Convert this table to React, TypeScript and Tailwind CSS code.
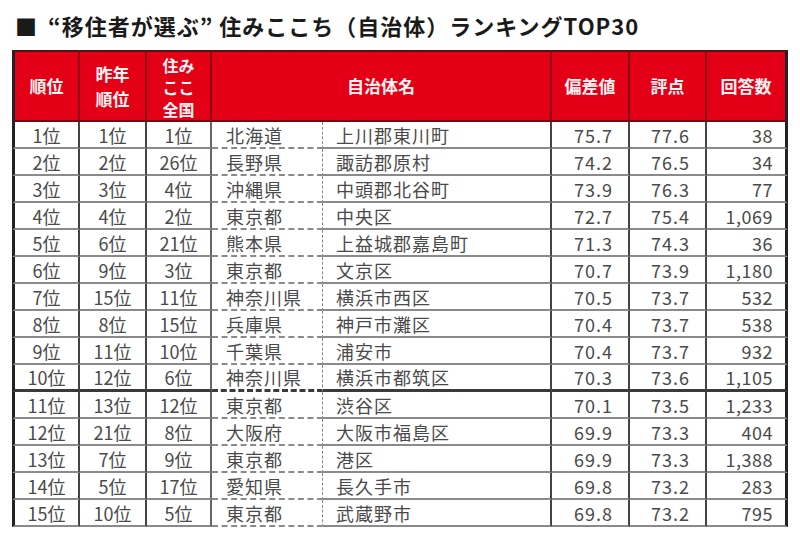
import React from "react";

const rows: string[][] = [
  ["1位", "1位", "1位", "北海道", "上川郡東川町", "75.7", "77.6", "38"],
  ["2位", "2位", "26位", "長野県", "諏訪郡原村", "74.2", "76.5", "34"],
  ["3位", "3位", "4位", "沖縄県", "中頭郡北谷町", "73.9", "76.3", "77"],
  ["4位", "4位", "2位", "東京都", "中央区", "72.7", "75.4", "1,069"],
  ["5位", "6位", "21位", "熊本県", "上益城郡嘉島町", "71.3", "74.3", "36"],
  ["6位", "9位", "3位", "東京都", "文京区", "70.7", "73.9", "1,180"],
  ["7位", "15位", "11位", "神奈川県", "横浜市西区", "70.5", "73.7", "532"],
  ["8位", "8位", "15位", "兵庫県", "神戸市灘区", "70.4", "73.7", "538"],
  ["9位", "11位", "10位", "千葉県", "浦安市", "70.4", "73.7", "932"],
  ["10位", "12位", "6位", "神奈川県", "横浜市都筑区", "70.3", "73.6", "1,105"],
  ["11位", "13位", "12位", "東京都", "渋谷区", "70.1", "73.5", "1,233"],
  ["12位", "21位", "8位", "大阪府", "大阪市福島区", "69.9", "73.3", "404"],
  ["13位", "7位", "9位", "東京都", "港区", "69.9", "73.3", "1,388"],
  ["14位", "5位", "17位", "愛知県", "長久手市", "69.8", "73.2", "283"],
  ["15位", "10位", "5位", "東京都", "武蔵野市", "69.8", "73.2", "795"],
];

const font = { fontFamily: '"Noto Sans CJK JP", "Noto Sans", sans-serif' };

export default function App() {
  return (
    <div
      className="w-[800px] h-[533px] overflow-hidden bg-white"
      style={font}
    >
      <div className="h-[50px] pl-[15px] pt-[7px] flex items-start">
        <h1 className="text-[22px] leading-[36px] font-bold text-[#1a1a1a] tracking-[1px] whitespace-nowrap">
          <span className="mr-[10px]">■</span>“移住者が選ぶ” 住みここち（自治体）ランキングTOP30
        </h1>
      </div>
      <div className="pl-[12px]">
        <table
          className="table-fixed border-separate text-[#4a4a4a]"
          style={{ borderSpacing: 0 }}
        >
          <colgroup>
            <col className="w-[68px]" />
            <col className="w-[67px]" />
            <col className="w-[65px]" />
            <col className="w-[111px]" />
            <col className="w-[229px]" />
            <col className="w-[78px]" />
            <col className="w-[77px]" />
            <col className="w-[81px]" />
          </colgroup>
          <thead>
            <tr className="h-[71px] bg-[#e30016] text-[#fff3f3] text-[17px] font-bold">
              <th className="border-t-2 border-l-[3px] border-r-2 border-b-2 border-t-[#5a1010] border-l-[#222] border-r-[#8a0a14] border-b-[#6a0a10] leading-[24px]">
                順位
              </th>
              <th className="border-t-2 border-r-2 border-b-2 border-t-[#5a1010] border-r-[#8a0a14] border-b-[#6a0a10] leading-[25px]">
                昨年
                <br />
                順位
              </th>
              <th className="border-t-2 border-r-2 border-b-2 border-t-[#5a1010] border-r-[#8a0a14] border-b-[#6a0a10] text-[16px] leading-[22px] pt-[2px]">
                住み
                <br />
                ここ
                <br />
                全国
              </th>
              <th
                colSpan={2}
                className="border-t-2 border-r-2 border-b-2 border-t-[#5a1010] border-r-[#8a0a14] border-b-[#6a0a10] leading-[24px]"
              >
                自治体名
              </th>
              <th className="border-t-2 border-r-2 border-b-2 border-t-[#5a1010] border-r-[#8a0a14] border-b-[#6a0a10] leading-[24px]">
                偏差値
              </th>
              <th className="border-t-2 border-r-2 border-b-2 border-t-[#5a1010] border-r-[#8a0a14] border-b-[#6a0a10] leading-[24px]">
                評点
              </th>
              <th className="border-t-2 border-r-[3px] border-b-2 border-t-[#5a1010] border-r-[#222] border-b-[#6a0a10] leading-[24px]">
                回答数
              </th>
            </tr>
          </thead>
          <tbody className="text-[18px]">
            {rows.map((r, i) => {
              const b =
                i === 9
                  ? "border-b-[3px] border-b-[#3a3a3a]"
                  : "border-b-2 border-b-[#8a8a8a]";
              return (
                <tr key={i} className="h-[27px] leading-[24px]">
                  <td className={`text-center border-l-[3px] border-l-[#222] border-r-2 border-r-[#444] ${b}`}>
                    {r[0]}
                  </td>
                  <td className={`text-center border-r-2 border-r-[#444] ${b}`}>{r[1]}</td>
                  <td className={`text-center border-r-2 border-r-[#666] ${b}`}>{r[2]}</td>
                  <td className={`pl-[14px] tracking-[1px] border-r border-dashed border-r-[#888] ${b}`}>
                    {r[3]}
                  </td>
                  <td className={`pl-[13px] tracking-[1px] border-r-2 border-r-[#444] ${b}`}>
                    {r[4]}
                  </td>
                  <td className={`text-right pr-[15px] tracking-[1px] border-r-2 border-r-[#444] ${b}`}>
                    {r[5]}
                  </td>
                  <td className={`text-right pr-[15px] tracking-[1px] border-r-2 border-r-[#444] ${b}`}>
                    {r[6]}
                  </td>
                  <td className={`text-right pr-[12px] tracking-[0.5px] border-r-[3px] border-r-[#222] ${b}`}>
                    {r[7]}
                  </td>
                </tr>
              );
            })}
          </tbody>
        </table>
      </div>
    </div>
  );
}
